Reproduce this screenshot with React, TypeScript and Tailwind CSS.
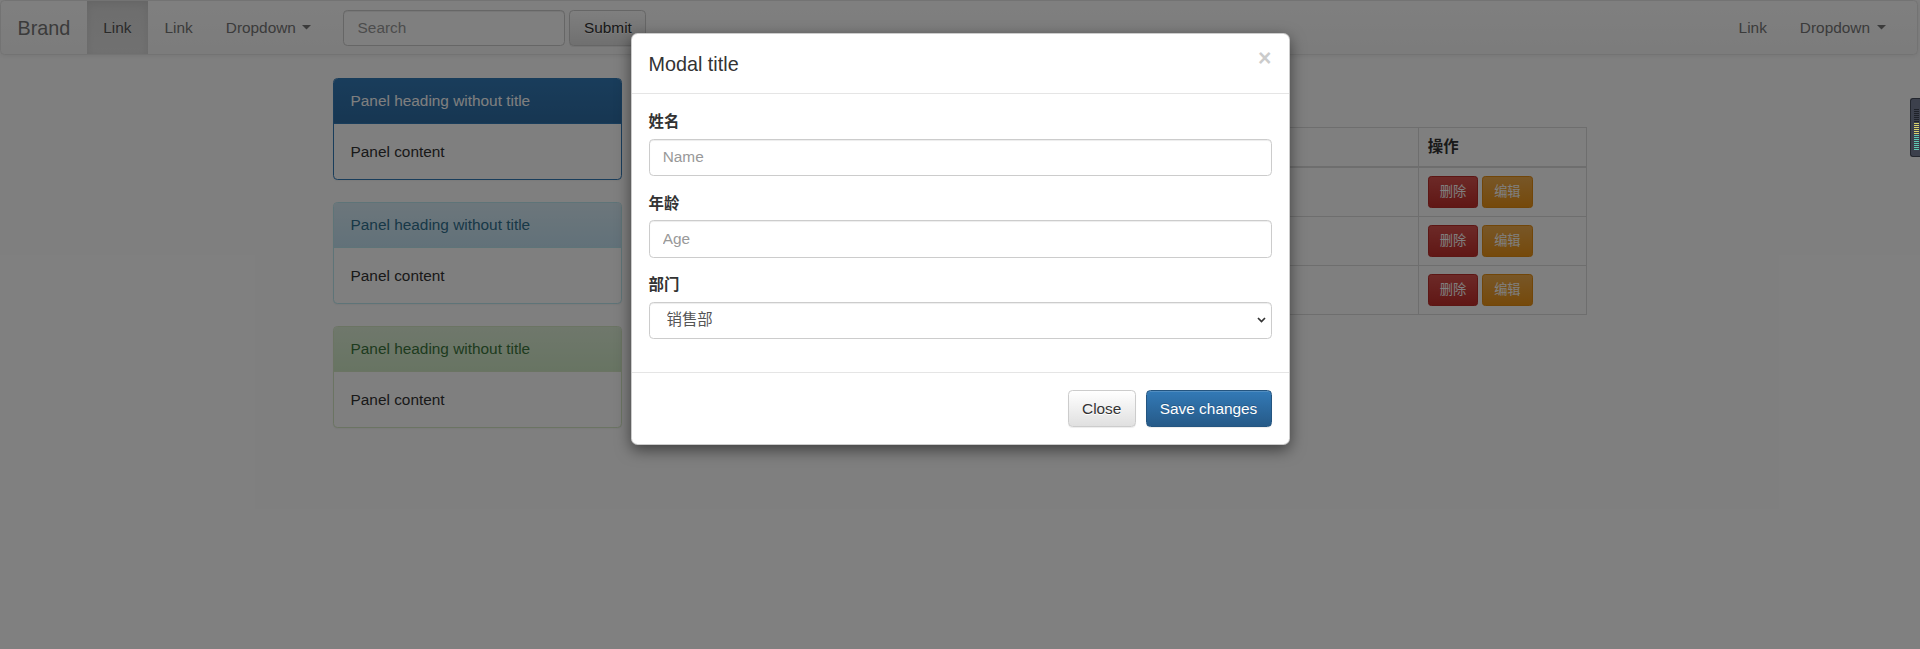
import React from "react";

const Caret = () => (
  <svg width="9" height="5" viewBox="0 0 9 5" className="ml-[6.5px] inline-block" aria-hidden="true">
    <polygon points="0,0 9,0 4.5,4.6" fill="currentColor" />
  </svg>
);

const rows = ["1", "2", "3"];

export default function App() {
  return (
    <div className="relative h-[649px] w-full overflow-hidden bg-white font-['Liberation_Sans','Noto_Sans_CJK_SC',sans-serif] text-[15.4px] leading-[22px] text-[#333]">
      {/* Navbar */}
      <nav className="mr-[2px] flex h-[55px] items-stretch justify-between rounded-[4.4px] border border-[#e7e7e7] bg-[linear-gradient(to_bottom,#ffffff,#f8f8f8)] shadow-[inset_0_1px_0_rgba(255,255,255,0.15),0_1px_5px_rgba(0,0,0,0.075)] [text-shadow:0_1px_0_rgba(255,255,255,0.25)]">
        <div className="flex items-stretch">
          <a className="flex items-center px-[16.5px] text-[19.8px] text-[#777]">Brand</a>
          <a className="flex items-center bg-[linear-gradient(to_bottom,#dbdbdb,#e2e2e2)] px-[16.5px] text-[#555] shadow-[inset_0_3px_9px_rgba(0,0,0,0.075)]">
            Link
          </a>
          <a className="flex items-center px-[16.5px] text-[#777]">Link</a>
          <a className="flex items-center px-[16.5px] text-[#777]">
            Dropdown
            <Caret />
          </a>
          <div className="flex items-center gap-[4px] px-[15.5px]">
            <input
              className="h-[36px] w-[222px] rounded-[4.4px] border border-[#ccc] bg-white px-[13.2px] text-[15.4px] text-[#555] shadow-[inset_0_1px_1px_rgba(0,0,0,0.075)] outline-none placeholder:text-[#999]"
              placeholder="Search"
            />
            <button className="h-[36px] w-[77px] rounded-[4.4px] border border-[#ccc] bg-[linear-gradient(to_bottom,#ffffff,#e0e0e0)] text-[15.4px] text-[#333] shadow-[inset_0_1px_0_rgba(255,255,255,0.15),0_1px_1px_rgba(0,0,0,0.075)] [text-shadow:0_1px_0_#fff]">
              Submit
            </button>
          </div>
        </div>
        <div className="flex items-stretch pr-[15px]">
          <a className="flex items-center px-[16.5px] text-[#777]">Link</a>
          <a className="flex items-center px-[16.5px] text-[#777]">
            Dropdown
            <Caret />
          </a>
        </div>
      </nav>

      {/* Container */}
      <div className="mx-auto mt-[23px] flex w-[1287px]">
        <div className="w-[321.75px] shrink-0 px-[16.5px]">
          <div className="mb-[22px] overflow-hidden rounded-[4.4px] border border-[#337ab7] bg-white shadow-[0_1px_2px_rgba(0,0,0,0.05)]">
            <div className="border-b border-[#337ab7] bg-[linear-gradient(to_bottom,#337ab7,#2e6da4)] px-[16.5px] py-[11px] text-white">
              Panel heading without title
            </div>
            <div className="p-[16.5px]">Panel content</div>
          </div>
          <div className="mb-[22px] overflow-hidden rounded-[4.4px] border border-[#bce8f1] bg-white shadow-[0_1px_2px_rgba(0,0,0,0.05)]">
            <div className="border-b border-[#bce8f1] bg-[linear-gradient(to_bottom,#d9edf7,#c4e3f3)] px-[16.5px] py-[11px] text-[#31708f]">
              Panel heading without title
            </div>
            <div className="p-[16.5px]">Panel content</div>
          </div>
          <div className="mb-[22px] overflow-hidden rounded-[4.4px] border border-[#d6e9c6] bg-white shadow-[0_1px_2px_rgba(0,0,0,0.05)]">
            <div className="border-b border-[#d6e9c6] bg-[linear-gradient(to_bottom,#dff0d8,#d0e9c6)] px-[16.5px] py-[11px] text-[#3c763d]">
              Panel heading without title
            </div>
            <div className="p-[16.5px]">Panel content</div>
          </div>
        </div>

        <div className="flex-1 px-[16.5px] pt-[49px]">
          <table className="w-full table-fixed border-collapse border border-[#ddd]">
            <colgroup>
              <col className="w-[100px]" />
              <col className="w-[220px]" />
              <col className="w-[150px]" />
              <col className="w-[293.25px]" />
              <col />
            </colgroup>
            <thead>
              <tr>
                {["", "", "", "", "操作"].map((h, i) => (
                  <th
                    key={i}
                    className="h-[39px] border border-b-2 border-[#ddd] px-[8.8px] py-[7px] text-left font-bold"
                  >
                    {h}
                  </th>
                ))}
              </tr>
            </thead>
            <tbody>
              {rows.map((r) => (
                <tr key={r}>
                  {[0, 1, 2, 3].map((i) => (
                    <td key={i} className="border border-[#ddd] px-[8.8px] py-[8px]" />
                  ))}
                  <td className="border border-[#ddd] px-[8.8px] py-[8px]">
                    <div className="flex gap-[4px]">
                      <button className="flex h-[32px] items-center rounded-[3.3px] border border-[#b92c28] bg-[linear-gradient(to_bottom,#d9534f,#c12e2a)] px-[11px] text-[13.2px] text-white">
                        删除
                      </button>
                      <button className="flex h-[32px] items-center rounded-[3.3px] border border-[#e38d13] bg-[linear-gradient(to_bottom,#f0ad4e,#eb9316)] px-[11px] text-[13.2px] text-white">
                        编辑
                      </button>
                    </div>
                  </td>
                </tr>
              ))}
            </tbody>
          </table>
        </div>
      </div>

      {/* Backdrop */}
      <div className="absolute inset-0 bg-black/50" />

      {/* Modal */}
      <div className="absolute inset-0 flex justify-center pt-[33px]">
        <div className="h-fit w-[659px] rounded-[6.6px] border border-[rgba(0,0,0,0.2)] bg-white shadow-[0_5px_15px_rgba(0,0,0,0.5)]">
          <div className="flex items-start justify-between border-b border-[#e5e5e5] px-[17px] py-[15.5px]">
            <h4 className="text-[19.8px] leading-[28.3px] text-[#333]">Modal title</h4>
            <span className="-mt-[3px] text-[23px] font-bold leading-none text-black opacity-20">×</span>
          </div>
          <div className="px-[17px] pb-[17px] pt-[17px]">
            <div className="mb-[16.5px]">
              <label className="mb-[5.5px] block font-bold">姓名</label>
              <input
                className="block h-[37.4px] w-full rounded-[4.4px] border border-[#ccc] px-[13.2px] text-[15.4px] text-[#555] shadow-[inset_0_1px_1px_rgba(0,0,0,0.075)] outline-none placeholder:text-[#999]"
                placeholder="Name"
              />
            </div>
            <div className="mb-[16.5px]">
              <label className="mb-[5.5px] block font-bold">年龄</label>
              <input
                className="block h-[37.4px] w-full rounded-[4.4px] border border-[#ccc] px-[13.2px] text-[15.4px] text-[#555] shadow-[inset_0_1px_1px_rgba(0,0,0,0.075)] outline-none placeholder:text-[#999]"
                placeholder="Age"
              />
            </div>
            <div className="mb-[16.5px]">
              <label className="mb-[5.5px] block font-bold">部门</label>
              <div className="relative">
                <select
                  className="block h-[37.4px] w-full appearance-none rounded-[4.4px] border border-[#ccc] bg-white pl-[17px] text-[15.4px] text-[#555] shadow-[inset_0_1px_1px_rgba(0,0,0,0.075)] outline-none"
                  defaultValue="销售部"
                >
                  <option>销售部</option>
                  <option>技术部</option>
                  <option>财务部</option>
                </select>
                <svg
                  className="pointer-events-none absolute right-[6px] top-1/2 -translate-y-1/2"
                  width="9"
                  height="6"
                  viewBox="0 0 9 6"
                  aria-hidden="true"
                >
                  <polyline points="1,1 4.5,4.5 8,1" fill="none" stroke="#333" strokeWidth="1.7" />
                </svg>
              </div>
            </div>
          </div>
          <div className="flex justify-end gap-[10px] border-t border-[#e5e5e5] px-[17px] py-[16.5px]">
            <button className="h-[37.4px] rounded-[4.4px] border border-[#ccc] bg-[linear-gradient(to_bottom,#ffffff,#e0e0e0)] px-[13.2px] text-[15.4px] text-[#333] shadow-[inset_0_1px_0_rgba(255,255,255,0.15),0_1px_1px_rgba(0,0,0,0.075)] [text-shadow:0_1px_0_#fff]">
              Close
            </button>
            <button className="h-[37.4px] rounded-[4.4px] border border-[#245580] bg-[linear-gradient(to_bottom,#337ab7,#265a88)] px-[13.2px] text-[15.4px] text-white shadow-[inset_0_1px_0_rgba(255,255,255,0.15),0_1px_1px_rgba(0,0,0,0.075)] [text-shadow:0_-1px_0_rgba(0,0,0,0.2)]">
              Save changes
            </button>
          </div>
        </div>
      </div>

      {/* Edge widget */}
      <div className="absolute right-0 top-[98px] h-[59px] w-[10px] rounded-l-[3px] border border-r-0 border-[#23262e] bg-[#3c404c]">
        <svg className="absolute left-[3px] top-[10px]" width="5" height="42" viewBox="0 0 5 42" aria-hidden="true">
          {Array.from({ length: 21 }).map((_, i) => (
            <rect
              key={i}
              x="0"
              y={i * 2}
              width="5"
              height="1"
              fill={i < 7 ? "#1e2129" : i < 13 ? "#d8d36c" : "#5ec9b2"}
            />
          ))}
        </svg>
      </div>
    </div>
  );
}
